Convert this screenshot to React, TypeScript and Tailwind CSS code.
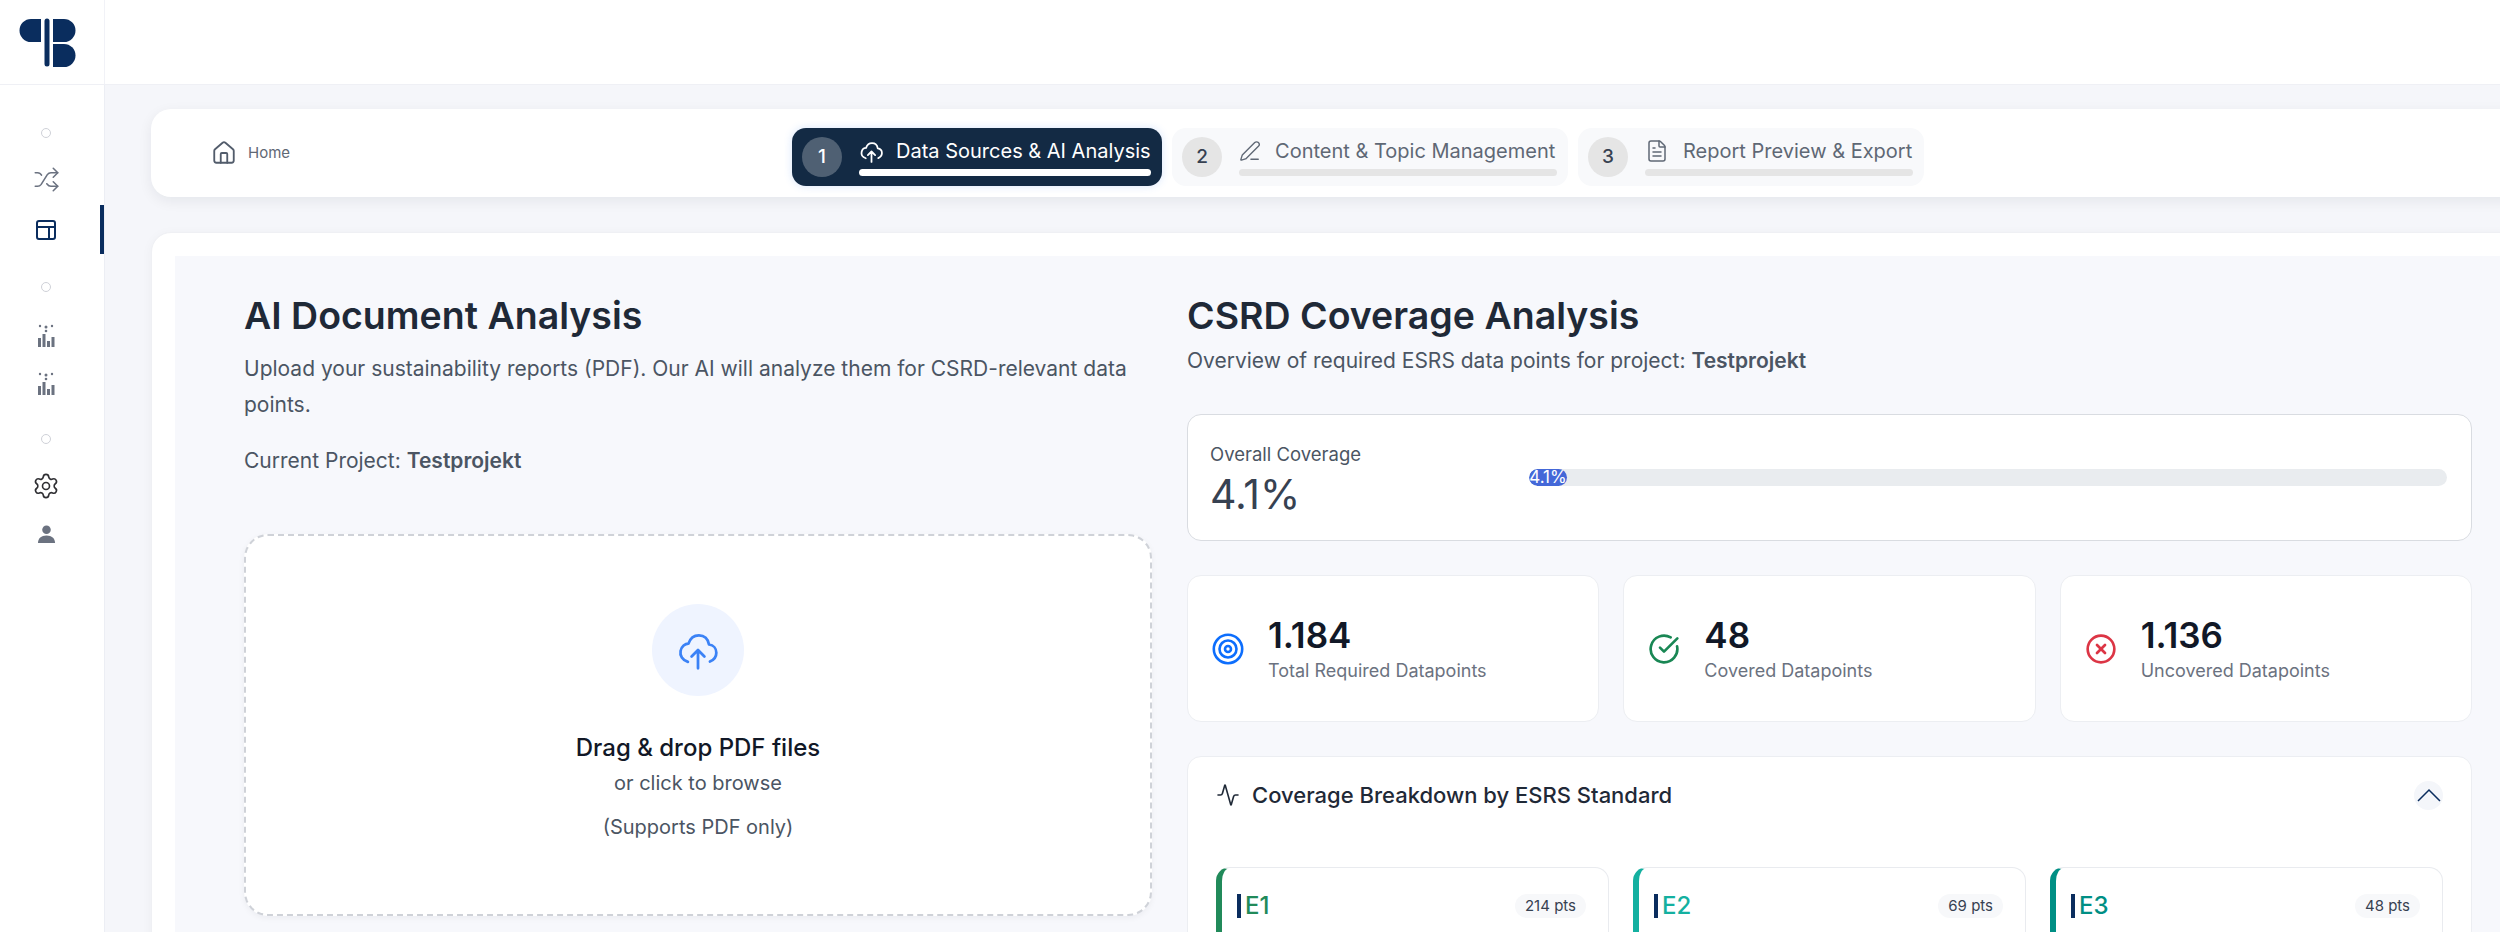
import React from 'react';
import { Shuffle, House, PenLine, FileText, CircleCheckBig, CircleX, Activity, Settings } from 'lucide-react';

function Logo() {
    return (
        <svg width="57" height="49" viewBox="0 0 57 49" fill="#0a2d5e">
            <path d="M22 1 H12 A11.500 11.500 0 0 0 12 24 H22 Z" />
            <rect x="25.500" y="0.500" width="5" height="48" rx="2.500" />
            <path d="M34 1 H45 A11.500 11.500 0 0 1 45 24 H34 Z" />
            <path d="M34 26 H45 A11.500 11.500 0 0 1 45 49 H34 Z" />
        </svg>
    );
}

function LayoutIcon() {
    return (
        <svg width="20" height="20" viewBox="0 0 20 20" fill="none" stroke="#0a2d5e" strokeWidth="2">
            <rect x="1" y="1" width="18" height="18" rx="2" />
            <path d="M1 7 H19 M13 7 V19" />
        </svg>
    );
}

function ChartNodes() {
    return (
        <svg width="18" height="24" viewBox="0 0 18 24" fill="#6b7280">
            <rect x="1" y="14" width="3" height="9" />
            <rect x="5.500" y="10" width="3" height="13" />
            <rect x="10" y="17" width="3" height="6" />
            <rect x="14.500" y="13" width="3" height="10" />
            <circle cx="3" cy="2" r="1.200" />
            <circle cx="9" cy="3" r="1.500" />
            <circle cx="15" cy="2" r="1.200" />
            <circle cx="9" cy="7" r="1.300" />
        </svg>
    );
}

function CloudUp({ size, color, sw, cls }: { size: number; color: string; sw: number; cls?: string }) {
    return (
        <svg className={cls} width={size} height={size} viewBox="0 0 24 24" fill="none" stroke={color} strokeWidth={sw} strokeLinecap="round" strokeLinejoin="round">
            <path d="M6.500 18.500 C3.500 17.500 2 15 2.500 12.500 C3 10 5 8.500 6.800 8.500 C7.800 5.500 10 4 12.500 4 C15.500 4 17.500 6 18 9 C20.500 9.300 22 11.300 22 13.500 C22 15.800 20.500 17.500 18.500 18.300" />
            <path d="M12 22 V12 M8.500 15.500 L12 12 L15.500 15.500" />
        </svg>
    );
}

function TargetIcon() {
    return (
        <svg width="32" height="32" viewBox="0 0 32 32" fill="none" stroke="#0d6efd" strokeWidth="2.600">
            <circle cx="16" cy="16" r="14.200" />
            <circle cx="16" cy="16" r="8.500" />
            <circle cx="16" cy="16" r="3" />
        </svg>
    );
}

function UserIcon() {
    return (
        <svg width="19" height="19" viewBox="0 0 20 20" fill="#6b7280">
            <circle cx="10" cy="5" r="4.500" />
            <path d="M1 19 C1 14 4.500 11 10 11 C15.500 11 19 14 19 19 Z" />
        </svg>
    );
}

function Dot() {
    return <div className="h-2.5 w-2.5 rounded-full border border-[#cfd1d8] bg-white" />;
}

function Step({ num, label, icon, active, wrapCls }: { num: string; label: string; icon: React.ReactNode; active?: boolean; wrapCls: string }) {
    return (
        <div className={'flex h-[58px] items-center rounded-[14px] pl-[10px] pr-[11px] ' + wrapCls + (active ? ' bg-[#132a44] shadow-[0_0_8px_rgba(59,130,246,0.2)]' : ' bg-[#f8f9fb]')}>
            <div className={'flex h-10 w-10 shrink-0 items-center justify-center rounded-full text-[19px] font-medium ' + (active ? 'bg-[#4f6073] text-white' : 'bg-[#e5e5e5] text-[#374151]')}>{num}</div>
            <div className="ml-[17px] flex flex-1 flex-col">
                <div className={'flex h-[26px] items-center ' + (active ? 'text-white' : 'text-[#5f6875]')}>
                    {icon}
                    <span className="whitespace-nowrap text-[20px] leading-[26px]">{label}</span>
                </div>
                <div className={'mt-[5px] h-[7px] rounded-full ' + (active ? 'bg-white' : 'bg-[#e5e5e5]')} />
            </div>
        </div>
    );
}

function StatCard({ icon, value, label }: { icon: React.ReactNode; value: string; label: string }) {
    return (
        <div className="flex h-[147px] items-center gap-6 rounded-[14px] border border-[#eceef2] bg-white pl-6">
            <div className="shrink-0">{icon}</div>
            <div>
                <div className="text-[35px] font-semibold leading-[44px] text-[#111827]">{value}</div>
                <div className="mt-[1px] text-[18px] leading-[26px] text-[#6b7280]">{label}</div>
            </div>
        </div>
    );
}

function StandardCard({ code, pts, borderCls, textCls }: { code: string; pts: string; borderCls: string; textCls: string }) {
    return (
        <div className={'h-[120px] rounded-[14px] border border-l-[6px] border-[#e9ebef] bg-white pl-[15px] pr-[22px] pt-[26px] ' + borderCls}>
            <div className="flex items-center justify-between">
                <div className="flex items-center gap-1">
                    <div className="h-6 w-1 bg-[#0a2d5e]" />
                    <span className={'text-[24px] font-medium leading-[24px] ' + textCls}>{code}</span>
                </div>
                <span className="rounded-full bg-[#f7f8fa] px-[10px] py-[2px] text-[15px] leading-[20px] text-[#374151]">{pts}</span>
            </div>
        </div>
    );
}

export default function App() {
    return (
        <div className="flex h-[932px] w-[2500px] flex-col overflow-hidden bg-white font-['Inter',sans-serif]">
            <div className="flex h-[85px] shrink-0 border-b border-[#eff0f5]">
                <div className="flex w-[105px] shrink-0 items-center justify-center rounded-tl-[24px] border-r border-[#f1f2f7] pr-[9px]">
                    <Logo />
                </div>
            </div>
            <div className="flex min-h-0 flex-1">
                <aside className="relative flex w-[105px] shrink-0 flex-col items-center border-r border-[#eceef4] bg-white pr-[12px] pt-[43px]">
                    <Dot />
                    <Shuffle className="mt-[28px] h-[27px] w-[27px] text-[#6b7280]" strokeWidth={1.4} />
                    <div className="mt-[27px]"><LayoutIcon /></div>
                    <div className="absolute right-0 top-[120px] h-[49px] w-1 bg-[#0a2d5e]" />
                    <div className="mt-[42px]"><Dot /></div>
                    <div className="mt-[32px]"><ChartNodes /></div>
                    <div className="mt-[24px]"><ChartNodes /></div>
                    <div className="mt-[38px]"><Dot /></div>
                    <Settings className="mt-[28px] h-[28px] w-[28px] text-[#2f2f33]" strokeWidth={1.4} />
                    <div className="mt-[25px]"><UserIcon /></div>
                </aside>
                <main className="min-w-0 flex-1 bg-[#f5f6fa] pl-[46px] pt-6">
                    <div className="flex h-[88px] w-[2400px] items-center rounded-[20px] bg-white pl-[60px] shadow-[0_4px_14px_rgba(17,24,39,0.07)]">
                        <House className="h-[26px] w-[26px] text-[#525c6b]" strokeWidth={1.7} />
                        <span className="ml-[11px] text-[15px] text-[#5f6875]">Home</span>
                        <div className="ml-[502px] mt-2 flex gap-[10px]">
                            <Step active num="1" label="Data Sources & AI Analysis" wrapCls="w-[370px]" icon={<CloudUp cls="mr-3 shrink-0" size={25} color="#ffffff" sw={1.7} />} />
                            <Step num="2" label="Content & Topic Management" wrapCls="w-[396px]" icon={<PenLine className="mr-[14px] h-[22px] w-[22px]" strokeWidth={1.5} />} />
                            <Step num="3" label="Report Preview & Export" wrapCls="w-[346px]" icon={<FileText className="mr-[14px] h-6 w-6" strokeWidth={1.5} />} />
                        </div>
                    </div>
                    <div className="mt-[35px] w-[2400px] rounded-[20px] border border-[#eff0f4] bg-white pl-[23px] pt-[23px] shadow-[0_2px_12px_rgba(17,24,39,0.04)]">
                        <div className="flex h-[700px] bg-[#f7f8fc] pl-[69px] pt-[36px]">
                            <section className="w-[908px] shrink-0">
                                <h1 className="text-[37.5px] font-semibold leading-[48px] text-[#1f2937]">AI Document Analysis</h1>
                                <p className="mt-[11px] text-[21px] leading-[36px] text-[#4b5563]">Upload your sustainability reports (PDF). Our AI will analyze them for CSRD-relevant data points.</p>
                                <p className="mt-[20px] text-[21px] leading-[36px] text-[#4b5563]">Current Project: <span className="font-semibold">Testprojekt</span></p>
                                <div className="mt-[55px] flex h-[382px] flex-col items-center rounded-[24px] border-2 border-dashed border-[#cfd2d8] bg-white pt-[68px] shadow-[0_2px_6px_rgba(17,24,39,0.05)]">
                                    <div className="flex h-[92px] w-[92px] items-center justify-center rounded-full bg-[#eff4ff]">
                                        <CloudUp size={44} color="#3b82f6" sw={1.5} />
                                    </div>
                                    <div className="mt-[34px] text-[24px] font-medium leading-[36px] text-[#111827]">Drag &amp; drop PDF files</div>
                                    <div className="mt-[2px] text-[20px] leading-[30px] text-[#4b5563]">or click to browse</div>
                                    <div className="mt-[14px] text-[20px] leading-[30px] text-[#4b5563]">(Supports PDF only)</div>
                                </div>
                            </section>
                            <section className="ml-[35px] w-[1285px] shrink-0">
                                <h1 className="text-[37.5px] font-semibold leading-[48px] text-[#1f2937]">CSRD Coverage Analysis</h1>
                                <p className="mt-[3px] text-[21px] leading-[36px] text-[#4b5563]">Overview of required ESRS data points for project: <span className="font-semibold">Testprojekt</span></p>
                                <div className="mt-[35px] flex h-[127px] items-center rounded-[14px] border border-[#d9dce1] bg-white pl-[22px] pr-6">
                                    <div className="w-[319px] shrink-0 pt-[3px]">
                                        <div className="text-[18.500px] leading-[26px] text-[#4b5563]">Overall Coverage</div>
                                        <div className="mt-[3px] text-[41px] leading-[48px] text-[#374151]">4.1%</div>
                                    </div>
                                    <div className="h-[17px] flex-1 overflow-hidden rounded-full bg-[#e9ecef]">
                                        <div className="flex h-full w-[38px] items-center justify-center overflow-hidden whitespace-nowrap rounded-full bg-[#4468d8] text-[17px] leading-[17px] text-white">4.1%</div>
                                    </div>
                                </div>
                                <div className="mt-[34px] grid grid-cols-3 gap-6">
                                    <StatCard icon={<TargetIcon />} value="1.184" label="Total Required Datapoints" />
                                    <StatCard icon={<CircleCheckBig className="h-8 w-8 text-[#198754]" strokeWidth={2} />} value="48" label="Covered Datapoints" />
                                    <StatCard icon={<CircleX className="h-8 w-8 text-[#dc3545]" strokeWidth={2} />} value="1.136" label="Uncovered Datapoints" />
                                </div>
                                <div className="mt-[34px] rounded-[14px] border border-[#eceef2] bg-white px-7 pt-[23px]">
                                    <div className="flex h-[30px] items-center justify-between">
                                        <div className="flex items-center gap-3">
                                            <Activity className="h-6 w-6 text-[#1f2937]" strokeWidth={1.6} />
                                            <span className="text-[22px] font-medium text-[#1f2937]">Coverage Breakdown by ESRS Standard</span>
                                        </div>
                                        <div className="flex h-[29px] w-[29px] items-center justify-center rounded-full bg-[#f4f6fa]">
                                            <svg width="24" height="14" viewBox="0 0 24 14" fill="none" stroke="#0a2d5e" strokeWidth="1.500"><path d="M1 13 L12 2 L23 13" /></svg>
                                        </div>
                                    </div>
                                    <div className="mt-[57px] grid grid-cols-3 gap-6">
                                        <StandardCard code="E1" pts="214 pts" borderCls="border-l-[#218a5a]" textCls="text-[#218a5a]" />
                                        <StandardCard code="E2" pts="69 pts" borderCls="border-l-[#14b0a0]" textCls="text-[#14b0a0]" />
                                        <StandardCard code="E3" pts="48 pts" borderCls="border-l-[#008f84]" textCls="text-[#008f84]" />
                                    </div>
                                </div>
                            </section>
                        </div>
                    </div>
                </main>
            </div>
        </div>
    );
}
